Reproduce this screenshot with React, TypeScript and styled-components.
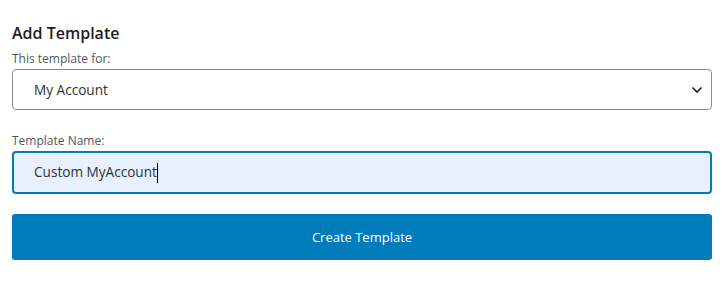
import React from "react";
import styled, { createGlobalStyle } from "styled-components";

const Global = createGlobalStyle`
  html, body { margin: 0; padding: 0; background: #ffffff; }
  body { font-family: "Open Sans", "Noto Sans", sans-serif; color: #1e1e1e; }
`;

const Panel = styled.div`
  padding: 22px 11px 0 12px;
  display: flex;
  flex-direction: column;
`;

const Heading = styled.h2`
  margin: 0 0 6px;
  font-size: 16px;
  font-weight: 600;
  line-height: 22px;
  color: #1e1e1e;
`;

const Label = styled.div`
  font-size: 12px;
  line-height: 18px;
  color: #50575e;
  margin-bottom: 1px;
`;

const Field = styled.div<{ $focused?: boolean }>`
  box-sizing: border-box;
  height: ${(p) => (p.$focused ? "43px" : "41px")};
  width: 100%;
  display: flex;
  align-items: center;
  padding-left: ${(p) => (p.$focused ? "20px" : "21px")};
  padding-right: 10px;
  border-radius: 4px;
  border: ${(p) => (p.$focused ? "2px solid #007cba" : "1px solid #8c8f94")};
  background: ${(p) => (p.$focused ? "#e8f0fe" : "#ffffff")};
  font-size: 13.6px;
  color: #2c3338;
`;

const FieldText = styled.span`
  flex: 1;
`;

const Caret = styled.span`
  display: inline-block;
  width: 1px;
  height: 20px;
  background: #000;
  vertical-align: middle;
`;

const Chevron = styled.svg`
  width: 12px;
  height: 8px;
  margin-right: -2px;
`;

const Group = styled.div<{ $gap: number }>`
  margin-bottom: ${(p) => p.$gap}px;
`;

const Button = styled.button`
  box-sizing: border-box;
  width: 100%;
  height: 46px;
  border: none;
  border-radius: 3px;
  background: #007cba;
  color: #ffffff;
  font-family: "Open Sans", "Noto Sans", sans-serif;
  font-size: 13px;
  cursor: pointer;
`;

export default function App() {
  return (
    <>
      <Global />
      <Panel>
        <Heading>Add Template</Heading>
        <Group $gap={22}>
          <Label>This template for:</Label>
          <Field>
            <FieldText>My Account</FieldText>
            <Chevron viewBox="0 0 12 8">
              <path d="M1.5 1.5 L6 6 L10.5 1.5" fill="none" stroke="#1e1e1e" strokeWidth="1.6" />
            </Chevron>
          </Field>
        </Group>
        <Group $gap={20}>
          <Label>Template Name:</Label>
          <Field $focused>
            <FieldText>
              Custom MyAccount<Caret />
            </FieldText>
          </Field>
        </Group>
        <Button>Create Template</Button>
      </Panel>
    </>
  );
}
